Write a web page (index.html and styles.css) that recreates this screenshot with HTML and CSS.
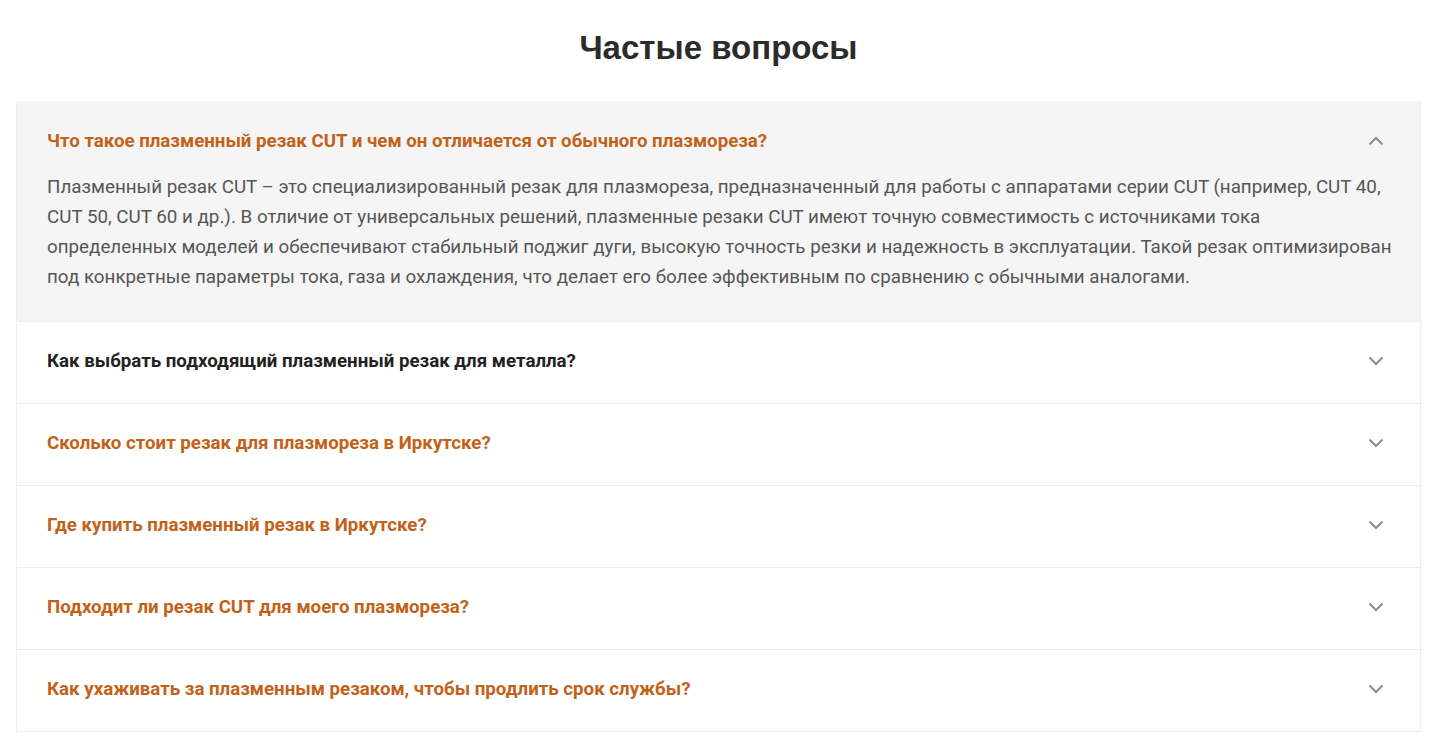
FILE: index.html
```html
<!DOCTYPE html>
<html lang="ru">
<head>
<meta charset="utf-8">
<title>Частые вопросы</title>
<link rel="stylesheet" href="styles.css">
</head>
<body>
<section class="faq">
  <h2 class="faq-title">Частые вопросы</h2>
  <div class="faq-list">
    <div class="faq-item open">
      <div class="faq-q">
        <span class="q-text">Что такое плазменный резак CUT и чем он отличается от обычного плазмореза?</span>
        <svg class="chev" width="16" height="10" viewBox="0 0 16 10"><polyline points="1.5,8.5 8,2 14.5,8.5" fill="none" stroke="#8c8c8c" stroke-width="2"/></svg>
      </div>
      <div class="faq-a">Плазменный резак CUT – это специализированный резак для плазмореза, предназначенный для работы с аппаратами серии CUT (например, CUT 40, CUT 50, CUT 60 и др.). В отличие от универсальных решений, плазменные резаки CUT имеют точную совместимость с источниками тока определенных моделей и обеспечивают стабильный поджиг дуги, высокую точность резки и надежность в эксплуатации. Такой резак оптимизирован под конкретные параметры тока, газа и охлаждения, что делает его более эффективным по сравнению с обычными аналогами.</div>
    </div>
    <div class="faq-item">
      <div class="faq-q">
        <span class="q-text dark">Как выбрать подходящий плазменный резак для металла?</span>
        <svg class="chev" width="16" height="10" viewBox="0 0 16 10"><polyline points="1.5,1.5 8,8 14.5,1.5" fill="none" stroke="#8c8c8c" stroke-width="2"/></svg>
      </div>
    </div>
    <div class="faq-item">
      <div class="faq-q">
        <span class="q-text">Сколько стоит резак для плазмореза в Иркутске?</span>
        <svg class="chev" width="16" height="10" viewBox="0 0 16 10"><polyline points="1.5,1.5 8,8 14.5,1.5" fill="none" stroke="#8c8c8c" stroke-width="2"/></svg>
      </div>
    </div>
    <div class="faq-item">
      <div class="faq-q">
        <span class="q-text">Где купить плазменный резак в Иркутске?</span>
        <svg class="chev" width="16" height="10" viewBox="0 0 16 10"><polyline points="1.5,1.5 8,8 14.5,1.5" fill="none" stroke="#8c8c8c" stroke-width="2"/></svg>
      </div>
    </div>
    <div class="faq-item">
      <div class="faq-q">
        <span class="q-text">Подходит ли резак CUT для моего плазмореза?</span>
        <svg class="chev" width="16" height="10" viewBox="0 0 16 10"><polyline points="1.5,1.5 8,8 14.5,1.5" fill="none" stroke="#8c8c8c" stroke-width="2"/></svg>
      </div>
    </div>
    <div class="faq-item">
      <div class="faq-q">
        <span class="q-text">Как ухаживать за плазменным резаком, чтобы продлить срок службы?</span>
        <svg class="chev" width="16" height="10" viewBox="0 0 16 10"><polyline points="1.5,1.5 8,8 14.5,1.5" fill="none" stroke="#8c8c8c" stroke-width="2"/></svg>
      </div>
    </div>
  </div>
</section>
</body>
</html>
```

FILE: styles.css
```css
html, body {
  margin: 0;
  padding: 0;
  background: #ffffff;
}
body {
  font-family: Roboto, "Noto Sans", sans-serif;
  color: #333;
}
.faq {
  padding: 0 13px 0 16px;
}
.faq-title {
  margin: 0;
  padding: 28px 0 0;
  height: 101px;
  box-sizing: border-box;
  text-align: center;
  font-family: "Liberation Sans", Arial, sans-serif;
  font-weight: 700;
  font-size: 33px;
  line-height: 40px;
  color: #2b2b2b;
}
.faq-list {
  border: 1px solid #eeeeee;
  border-top: none;
}
.faq-item {
  border-top: 1px solid #eeeeee;
}
.faq-item:first-child {
  border-top: none;
}
.faq-item.open {
  background: #f5f5f5;
  padding-bottom: 29px;
}
.faq-q {
  display: flex;
  align-items: center;
  justify-content: space-between;
  padding: 27px 36px 30px 30px;
  line-height: 24px;
}
.faq-item.open .faq-q {
  padding-top: 28px;
  padding-bottom: 19px;
}
.q-text {
  font-size: 18.7px;
  font-weight: 700;
  color: #c2621a;
}
.q-text.dark {
  color: #222222;
}
.chev {
  display: block;
  flex: none;
}
.faq-a {
  padding: 0 26px 0 30px;
  font-size: 18.8px;
  line-height: 30px;
  color: #555555;
}
```
